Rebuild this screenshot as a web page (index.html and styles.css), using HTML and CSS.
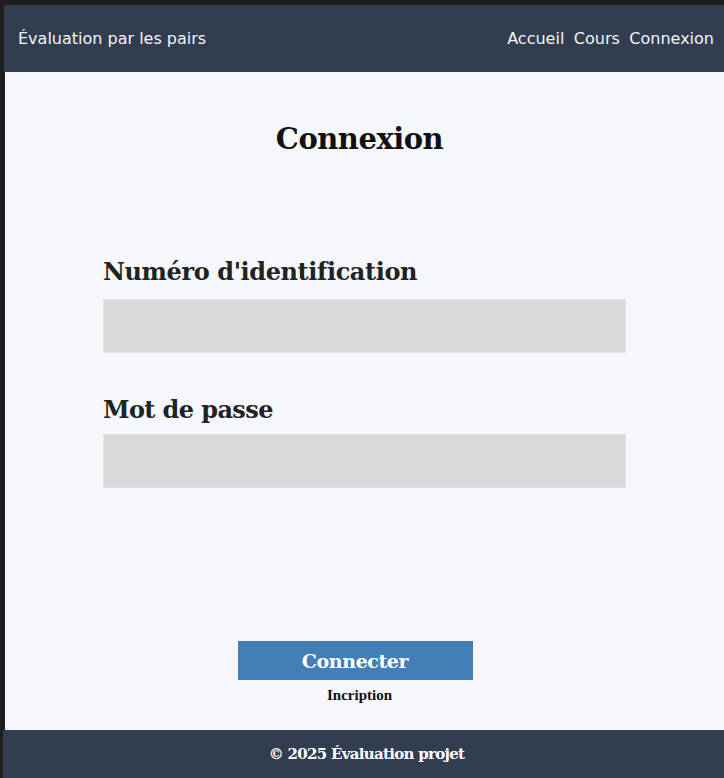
FILE: index.html
```html
<!DOCTYPE html>
<html lang="fr">
<head>
<meta charset="utf-8">
<title>Connexion</title>
<link rel="stylesheet" href="styles.css">
</head>
<body>
<div class="frame">
  <header class="topbar">
    <span class="brand">Évaluation par les pairs</span>
    <nav class="nav">
      <a href="#">Accueil</a>
      <a href="#">Cours</a>
      <a href="#">Connexion</a>
    </nav>
  </header>
  <main class="content">
    <h1 class="title">Connexion</h1>
    <form class="form">
      <label class="label">Numéro d'identification</label>
      <div class="input"></div>
      <label class="label label-2">Mot de passe</label>
      <div class="input"></div>
      <div class="actions">
        <button type="button" class="btn">Connecter</button>
        <a class="link" href="#">Incription</a>
      </div>
    </form>
  </main>
</div>
<footer class="footer">© 2025 Évaluation projet</footer>
</body>
</html>
```

FILE: styles.css
```css
* { box-sizing: border-box; }
html, body { margin: 0; padding: 0; }
body {
  background: #1e1e1e;
  width: 724px;
  height: 778px;
  overflow: hidden;
}
.frame {
  padding: 5px 0 0 5px;
}
.topbar {
  height: 67px;
  background: #323e4f;
  display: flex;
  align-items: center;
  justify-content: space-between;
  padding: 0 10px 0 14px;
  margin-left: -1px;
  font-family: "DejaVu Sans", sans-serif;
  color: #f2f4f7;
  font-size: 16px;
}
.nav { display: flex; gap: 9.5px; }
.nav a { color: #f2f4f7; text-decoration: none; }
.content {
  background: #f5f7fa;
  height: 658px;
  padding-top: 50px;
}
.title {
  margin: 0;
  text-align: center;
  font-family: "DejaVu Serif", serif;
  font-weight: bold;
  font-size: 29px;
  color: #111;
  padding-right: 10px;
  letter-spacing: -0.5px;
}
.form {
  width: 523px;
  margin: 101px 0 0 98px;
  display: flex;
  flex-direction: column;
}
.label {
  font-family: "DejaVu Serif", serif;
  font-weight: bold;
  font-size: 24px;
  color: #222;
  letter-spacing: -0.4px;
  line-height: 30px;
  margin-bottom: 12px;
}
.label-2 { margin-top: 42px; margin-bottom: 9px; letter-spacing: -0.6px; }
.input {
  height: 54px;
  background: #d9d9d9;
  border: 1px solid #e2e2e2;
}
.actions {
  display: flex;
  flex-direction: column;
  align-items: center;
  margin-top: 153px;
  margin-left: -10px;
}
.btn {
  width: 235px;
  height: 39px;
  background: #437eb5;
  border: none;
  color: #fff;
  font-family: "DejaVu Serif", serif;
  font-weight: bold;
  font-size: 19px;
  letter-spacing: -0.4px;
  padding: 0;
  margin-left: -9px;
}
.link {
  margin-top: 7px;
  font-family: "Liberation Serif", serif;
  font-weight: bold;
  font-size: 15px;
  color: #111;
  text-decoration: none;
}
.footer {
  margin-left: 3px;
  height: 48px;
  background: #323e4f;
  color: #fff;
  display: flex;
  align-items: center;
  justify-content: center;
  font-family: "DejaVu Serif", serif;
  font-weight: bold;
  font-size: 15px;
  letter-spacing: -0.7px;
  padding-left: 6px;
}
```
